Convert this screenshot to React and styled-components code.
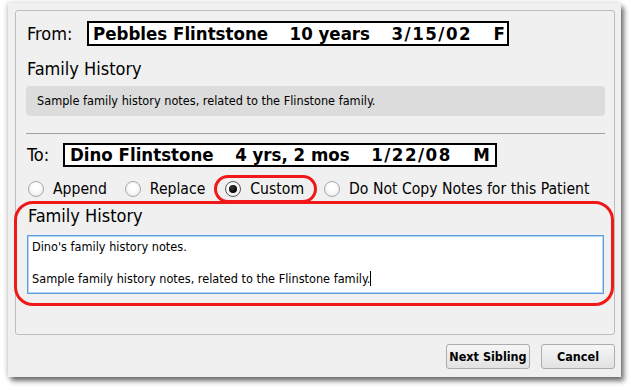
import React from "react";
import styled, { createGlobalStyle } from "styled-components";

const font = `"DejaVu Sans Condensed", "DejaVu Sans", sans-serif`;

const GlobalStyle = createGlobalStyle`
	html, body {
		margin: 0;
		padding: 0;
		background: #ffffff;
		font-family: ${font};
		font-stretch: condensed;
		color: #000;
	}
`;

const Page = styled.div`
	width: 631px;
	height: 390px;
	padding: 3px 0 0 8px;
	box-sizing: border-box;
`;

const Dialog = styled.div`
	width: 613px;
	box-sizing: border-box;
	padding: 7px 6px 8px 7px;
	background: #f0f0f0;
	box-shadow: 3px 4px 5px rgba(0, 0, 0, 0.55), -1px 0 5px rgba(0, 0, 0, 0.18);
`;

const Panel = styled.div`
	border: 1px solid #bdbdbd;
	border-radius: 3px;
	padding: 10px 9px 28px 10px;
`;

const PatientRow = styled.div`
	display: flex;
	align-items: center;
	margin-top: ${(p) => p.$top || 0}px;
`;

const RowLabel = styled.div`
	font-size: 18px;
	line-height: 22px;
	width: ${(p) => p.$width}px;
	padding-left: 1px;
`;

const NameBox = styled.div`
	display: flex;
	gap: 21.5px;
	box-sizing: border-box;
	width: ${(p) => p.$width}px;
	height: ${(p) => p.$height}px;
	border: 2px solid #000;
	background: #fff;
	padding-left: ${(p) => p.$pad}px;
	font-size: 18.5px;
	font-weight: bold;
	line-height: ${(p) => p.$height - 4}px;
	white-space: nowrap;
`;

const Field = styled.span`
	letter-spacing: ${(p) => p.$spread || 0}px;
`;

const SectionLabel = styled.div`
	font-size: 18px;
	line-height: 22px;
	padding-left: 1px;
	margin-top: ${(p) => p.$top || 0}px;
`;

const NoteBox = styled.div`
	margin-top: 6px;
	height: 30px;
	border-radius: 4px;
	background: #dcdcdc;
	padding-left: 11px;
	font-size: 12.6px;
	line-height: 30px;
`;

const Separator = styled.div`
	margin-top: 17px;
	height: 1px;
	background: #a0a0a0;
`;

const RadioRow = styled.div`
	display: flex;
	align-items: center;
	margin-top: 8px;
	height: 28px;
	padding-left: 2px;
`;

const Option = styled.label`
	display: flex;
	align-items: center;
	gap: 9px;
	font-size: 15.6px;
	line-height: 20px;
	margin-right: ${(p) => p.$after || 0}px;
	white-space: nowrap;
`;

const Circle = styled.span`
	position: relative;
	width: 14px;
	height: 14px;
	border-radius: 50%;
	border: 1px solid ${(p) => (p.$checked ? "#5a5a5a" : "#a8a8a8")};
	background: radial-gradient(circle at 50% 40%, #ffffff 30%, #e4e4e4 100%);
	flex: none;

	&::after {
		content: "";
		display: ${(p) => (p.$checked ? "block" : "none")};
		position: absolute;
		left: 3px;
		top: 3px;
		width: 8px;
		height: 8px;
		border-radius: 50%;
		background: radial-gradient(circle at 40% 35%, #3a3a3a, #000 70%);
	}
`;

const Ring = styled.div`
	display: flex;
	align-items: center;
	box-sizing: border-box;
	height: 28px;
	border: 3px solid #f01818;
	border-radius: 14px;
	padding: 0 10px 0 8px;
	margin-right: 7px;
`;

const Highlight = styled.div`
	margin: -2px -9px 0 -12px;
	border: 3px solid #f01818;
	border-radius: 19px;
	padding: 1px 7px 9px 10px;
`;

const NotesField = styled.div`
	margin-top: 8px;
	background: #fff;
	border: 1px solid #5c9ee2;
	box-shadow: inset 0 0 0 1px #b5d4f4;
	padding: 3px 5px 6px 4px;
	font-size: 12.6px;
	line-height: 16px;
	white-space: pre;
`;

const Caret = styled.span`
	display: inline-block;
	width: 1px;
	height: 15px;
	background: #000;
	vertical-align: -3px;
`;

const ButtonBar = styled.div`
	display: flex;
	justify-content: flex-end;
	gap: 11px;
	margin-top: 9px;
`;

const Button = styled.button`
	width: ${(p) => p.$width}px;
	height: 25px;
	padding: 0;
	border: 1px solid #adadad;
	border-radius: 3px;
	background: linear-gradient(#f6f6f6, #e2e2e2);
	font-family: ${font};
	font-stretch: condensed;
	font-size: 12.5px;
	font-weight: bold;
	color: #000;
`;

const radios = [
	{ label: "Append", after: 18 },
	{ label: "Replace", after: 9 },
];

export default function App() {
	return (
		<>
			<GlobalStyle />
			<Page>
				<Dialog>
					<Panel>
						<PatientRow>
							<RowLabel $width={60}>From:</RowLabel>
							<NameBox $width={422} $height={25} $pad={4}>
								<Field>Pebbles Flintstone</Field>
								<Field>10 years</Field>
								<Field $spread={1.5}>3/15/02</Field>
								<Field>F</Field>
							</NameBox>
						</PatientRow>
						<SectionLabel $top={12}>Family History</SectionLabel>
						<NoteBox>Sample family history notes, related to the Flinstone family.</NoteBox>
						<Separator />
						<PatientRow $top={9}>
							<RowLabel $width={36}>To:</RowLabel>
							<NameBox $width={434} $height={24} $pad={5}>
								<Field>Dino Flintstone</Field>
								<Field>4 yrs, 2 mos</Field>
								<Field $spread={1.5}>1/22/08</Field>
								<Field>M</Field>
							</NameBox>
						</PatientRow>
						<RadioRow>
							{radios.map((r) => (
								<Option key={r.label} $after={r.after}>
									<Circle />
									{r.label}
								</Option>
							))}
							<Ring>
								<Option>
									<Circle $checked />
									Custom
								</Option>
							</Ring>
							<Option>
								<Circle />
								Do Not Copy Notes for this Patient
							</Option>
						</RadioRow>
						<Highlight>
							<SectionLabel>Family History</SectionLabel>
							<NotesField>
								{"Dino's family history notes.\n\nSample family history notes, related to the Flinstone family."}
								<Caret />
							</NotesField>
						</Highlight>
					</Panel>
					<ButtonBar>
						<Button $width={84}>Next Sibling</Button>
						<Button $width={74}>Cancel</Button>
					</ButtonBar>
				</Dialog>
			</Page>
		</>
	);
}
